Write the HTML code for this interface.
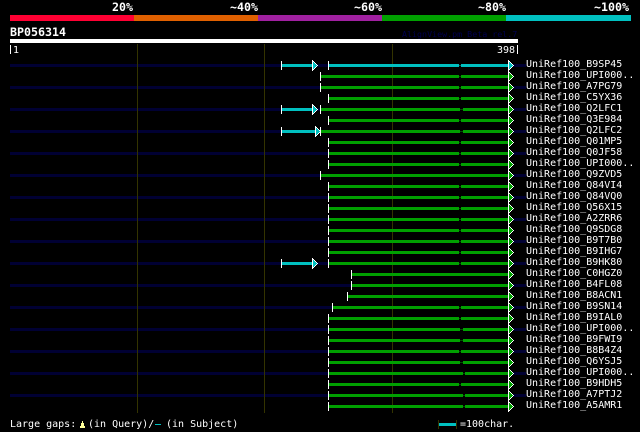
<!DOCTYPE html>
<html><head><meta charset="utf-8"><title>BP056314</title>
<style>
html,body{margin:0;padding:0;background:#000;width:640px;height:432px;overflow:hidden;position:relative}
i,b,span{position:absolute;display:block;font-style:normal}
.x{font-family:"DejaVu Sans Mono","Liberation Mono",monospace;font-size:10px;line-height:12px;color:#fff;white-space:pre;font-weight:normal}
.h{font-family:"DejaVu Sans Mono","Liberation Mono",monospace;font-size:11.63px;line-height:14px;font-weight:bold;color:#fff;white-space:pre}
.r{position:absolute;left:0;width:640px;height:3px}
.d{left:10px;width:516px;height:3px;background:#000033;top:0}
.t{top:-3px;width:1px;height:9px;background:#fff}
.c,.g{top:0;height:3px}
.c{background:#00c0c0}.g{background:#00a000}
.e2,.e3{top:0;height:3px;background:linear-gradient(#000,#000) 0 0/100% 1px no-repeat,linear-gradient(#000,#000) 0 2px/100% 1px no-repeat,#005000}
.e2{width:2px}.e3{width:3px}
.ec{background:linear-gradient(#000,#000) 0 0/100% 1px no-repeat,linear-gradient(#000,#000) 0 2px/100% 1px no-repeat,#006060}
.a{top:-4px;width:6px;height:11px;--f:#00a000;
background:
linear-gradient(var(--f),var(--f)) 1px 2px/1px 7px no-repeat,
linear-gradient(var(--f),var(--f)) 2px 3px/1px 5px no-repeat,
linear-gradient(var(--f),var(--f)) 3px 4px/1px 3px no-repeat,
linear-gradient(var(--f),var(--f)) 4px 5px/1px 1px no-repeat,
linear-gradient(#fff,#fff) 0 0/1px 11px no-repeat,
linear-gradient(#fff,#fff) 1px 1px/1px 9px no-repeat,
linear-gradient(#fff,#fff) 2px 2px/1px 7px no-repeat,
linear-gradient(#fff,#fff) 3px 3px/1px 5px no-repeat,
linear-gradient(#fff,#fff) 4px 4px/1px 3px no-repeat,
linear-gradient(#fff,#fff) 5px 5px/1px 1px no-repeat}
.ac{--f:#00c0c0}
.e{left:508px}
.v{top:44px;width:1px;height:369px;background:#333300}
.n{left:526px}
</style></head><body>
<i style="left:10px;top:15px;width:124px;height:6px;background:#ff0033"></i>
<i style="left:134px;top:15px;width:124px;height:6px;background:#e06000"></i>
<i style="left:258px;top:15px;width:124px;height:6px;background:#a020a0"></i>
<i style="left:382px;top:15px;width:124px;height:6px;background:#00a000"></i>
<i style="left:506px;top:15px;width:125px;height:6px;background:#00c0c0"></i>
<span class="h" style="left:112px;top:0">20%</span>
<span class="h" style="left:230px;top:0">~40%</span>
<span class="h" style="left:354px;top:0">~60%</span>
<span class="h" style="left:478px;top:0">~80%</span>
<span class="h" style="left:594px;top:0">~100%</span>
<span class="h" style="left:10px;top:25px">BP056314</span>
<span class="x" style="left:402px;top:28px;font-size:8.33px;color:#000050">AlignView.pm Beta rel.7</span>
<i style="left:10px;top:39px;width:508px;height:4px;background:#fff"></i>
<i style="left:10px;top:45px;width:1px;height:9px;background:#fff"></i>
<span class="x" style="left:13px;top:45px">1</span>
<span class="x" style="left:497px;top:45px">398</span>
<i style="left:517px;top:45px;width:1px;height:9px;background:#fff"></i>

<i class="d" style="top:64px"></i><i class="d" style="top:86px"></i><i class="d" style="top:108px"></i><i class="d" style="top:130px"></i>
<i class="d" style="top:152px"></i><i class="d" style="top:174px"></i><i class="d" style="top:196px"></i><i class="d" style="top:218px"></i>
<i class="d" style="top:240px"></i><i class="d" style="top:262px"></i><i class="d" style="top:284px"></i><i class="d" style="top:306px"></i>
<i class="d" style="top:328px"></i><i class="d" style="top:350px"></i><i class="d" style="top:372px"></i><i class="d" style="top:394px"></i>

<i class="v" style="left:137px"></i><i class="v" style="left:264px"></i><i class="v" style="left:392px"></i>

<div class="r" style="top:64px"><i class="t" style="left:281px"></i><i class="c" style="left:282px;width:30px"></i><i class="a ac" style="left:312px"></i><i class="t" style="left:328px"></i><i class="c" style="left:329px;width:179px"></i><i class="e2 ec" style="left:459px"></i><i class="a ac e"></i></div>
<div class="r" style="top:75px"><i class="t" style="left:320px"></i><i class="g" style="left:321px;width:187px"></i><i class="e2" style="left:459px"></i><i class="a e"></i></div>
<div class="r" style="top:86px"><i class="t" style="left:320px"></i><i class="g" style="left:321px;width:187px"></i><i class="e2" style="left:459px"></i><i class="a e"></i></div>
<div class="r" style="top:97px"><i class="t" style="left:328px"></i><i class="g" style="left:329px;width:179px"></i><i class="e2" style="left:459px"></i><i class="a e"></i></div>
<div class="r" style="top:108px"><i class="t" style="left:281px"></i><i class="c" style="left:282px;width:30px"></i><i class="a ac" style="left:312px"></i><i class="t" style="left:320px"></i><i class="g" style="left:321px;width:187px"></i><i class="e3" style="left:460px"></i><i class="a e"></i></div>
<div class="r" style="top:119px"><i class="t" style="left:328px"></i><i class="g" style="left:329px;width:179px"></i><i class="e2" style="left:459px"></i><i class="a e"></i></div>
<div class="r" style="top:130px"><i class="t" style="left:281px"></i><i class="c" style="left:282px;width:33px"></i><i class="t" style="left:320px"></i><i class="g" style="left:321px;width:187px"></i><i class="a ac" style="left:315px"></i><i class="e3" style="left:460px"></i><i class="a e"></i></div>
<div class="r" style="top:141px"><i class="t" style="left:328px"></i><i class="g" style="left:329px;width:179px"></i><i class="e2" style="left:459px"></i><i class="a e"></i></div>
<div class="r" style="top:152px"><i class="t" style="left:328px"></i><i class="g" style="left:329px;width:179px"></i><i class="e2" style="left:459px"></i><i class="a e"></i></div>
<div class="r" style="top:163px"><i class="t" style="left:328px"></i><i class="g" style="left:329px;width:179px"></i><i class="e2" style="left:459px"></i><i class="a e"></i></div>
<div class="r" style="top:174px"><i class="t" style="left:320px"></i><i class="g" style="left:321px;width:187px"></i><i class="a e"></i></div>
<div class="r" style="top:185px"><i class="t" style="left:328px"></i><i class="g" style="left:329px;width:179px"></i><i class="e2" style="left:459px"></i><i class="a e"></i></div>
<div class="r" style="top:196px"><i class="t" style="left:328px"></i><i class="g" style="left:329px;width:179px"></i><i class="e2" style="left:459px"></i><i class="a e"></i></div>
<div class="r" style="top:207px"><i class="t" style="left:328px"></i><i class="g" style="left:329px;width:179px"></i><i class="e2" style="left:459px"></i><i class="a e"></i></div>
<div class="r" style="top:218px"><i class="t" style="left:328px"></i><i class="g" style="left:329px;width:179px"></i><i class="e2" style="left:459px"></i><i class="a e"></i></div>
<div class="r" style="top:229px"><i class="t" style="left:328px"></i><i class="g" style="left:329px;width:179px"></i><i class="e2" style="left:459px"></i><i class="a e"></i></div>
<div class="r" style="top:240px"><i class="t" style="left:328px"></i><i class="g" style="left:329px;width:179px"></i><i class="e2" style="left:459px"></i><i class="a e"></i></div>
<div class="r" style="top:251px"><i class="t" style="left:328px"></i><i class="g" style="left:329px;width:179px"></i><i class="e2" style="left:459px"></i><i class="a e"></i></div>
<div class="r" style="top:262px"><i class="t" style="left:281px"></i><i class="c" style="left:282px;width:30px"></i><i class="a ac" style="left:312px"></i><i class="t" style="left:328px"></i><i class="g" style="left:329px;width:179px"></i><i class="e2" style="left:459px"></i><i class="a e"></i></div>
<div class="r" style="top:273px"><i class="t" style="left:351px"></i><i class="g" style="left:352px;width:156px"></i><i class="a e"></i></div>
<div class="r" style="top:284px"><i class="t" style="left:351px"></i><i class="g" style="left:352px;width:156px"></i><i class="a e"></i></div>
<div class="r" style="top:295px"><i class="t" style="left:347px"></i><i class="g" style="left:348px;width:160px"></i><i class="a e"></i></div>
<div class="r" style="top:306px"><i class="t" style="left:332px"></i><i class="g" style="left:333px;width:175px"></i><i class="e2" style="left:459px"></i><i class="a e"></i></div>
<div class="r" style="top:317px"><i class="t" style="left:328px"></i><i class="g" style="left:329px;width:179px"></i><i class="e2" style="left:459px"></i><i class="a e"></i></div>
<div class="r" style="top:328px"><i class="t" style="left:328px"></i><i class="g" style="left:329px;width:179px"></i><i class="e3" style="left:460px"></i><i class="a e"></i></div>
<div class="r" style="top:339px"><i class="t" style="left:328px"></i><i class="g" style="left:329px;width:179px"></i><i class="e3" style="left:460px"></i><i class="a e"></i></div>
<div class="r" style="top:350px"><i class="t" style="left:328px"></i><i class="g" style="left:329px;width:179px"></i><i class="e2" style="left:459px"></i><i class="a e"></i></div>
<div class="r" style="top:361px"><i class="t" style="left:328px"></i><i class="g" style="left:329px;width:179px"></i><i class="e3" style="left:460px"></i><i class="a e"></i></div>
<div class="r" style="top:372px"><i class="t" style="left:328px"></i><i class="g" style="left:329px;width:179px"></i><i class="e2" style="left:463px"></i><i class="a e"></i></div>
<div class="r" style="top:383px"><i class="t" style="left:328px"></i><i class="g" style="left:329px;width:179px"></i><i class="e2" style="left:459px"></i><i class="a e"></i></div>
<div class="r" style="top:394px"><i class="t" style="left:328px"></i><i class="g" style="left:329px;width:179px"></i><i class="e2" style="left:463px"></i><i class="a e"></i></div>
<div class="r" style="top:405px"><i class="t" style="left:328px"></i><i class="g" style="left:329px;width:179px"></i><i class="e2" style="left:463px"></i><i class="a e"></i></div>

<span class="x n" style="top:59px">UniRef100_B9SP45</span>
<span class="x n" style="top:70px">UniRef100_UPI000..</span>
<span class="x n" style="top:81px">UniRef100_A7PG79</span>
<span class="x n" style="top:92px">UniRef100_C5YX36</span>
<span class="x n" style="top:103px">UniRef100_Q2LFC1</span>
<span class="x n" style="top:114px">UniRef100_Q3E984</span>
<span class="x n" style="top:125px">UniRef100_Q2LFC2</span>
<span class="x n" style="top:136px">UniRef100_Q01MP5</span>
<span class="x n" style="top:147px">UniRef100_Q0JF58</span>
<span class="x n" style="top:158px">UniRef100_UPI000..</span>
<span class="x n" style="top:169px">UniRef100_Q9ZVD5</span>
<span class="x n" style="top:180px">UniRef100_Q84VI4</span>
<span class="x n" style="top:191px">UniRef100_Q84VQ0</span>
<span class="x n" style="top:202px">UniRef100_Q56X15</span>
<span class="x n" style="top:213px">UniRef100_A2ZRR6</span>
<span class="x n" style="top:224px">UniRef100_Q9SDG8</span>
<span class="x n" style="top:235px">UniRef100_B9T7B0</span>
<span class="x n" style="top:246px">UniRef100_B9IHG7</span>
<span class="x n" style="top:257px">UniRef100_B9HK80</span>
<span class="x n" style="top:268px">UniRef100_C0HGZ0</span>
<span class="x n" style="top:279px">UniRef100_B4FL08</span>
<span class="x n" style="top:290px">UniRef100_B8ACN1</span>
<span class="x n" style="top:301px">UniRef100_B9SN14</span>
<span class="x n" style="top:312px">UniRef100_B9IAL0</span>
<span class="x n" style="top:323px">UniRef100_UPI000..</span>
<span class="x n" style="top:334px">UniRef100_B9FWI9</span>
<span class="x n" style="top:345px">UniRef100_B8B4Z4</span>
<span class="x n" style="top:356px">UniRef100_Q6YSJ5</span>
<span class="x n" style="top:367px">UniRef100_UPI000..</span>
<span class="x n" style="top:378px">UniRef100_B9HDH5</span>
<span class="x n" style="top:389px">UniRef100_A7PTJ2</span>
<span class="x n" style="top:400px">UniRef100_A5AMR1</span>

<span class="x" style="left:10px;top:419px">Large gaps:</span>
<i style="left:82px;top:421px;width:1px;height:7px;background:#ffff99"></i>
<i style="left:81px;top:423px;width:3px;height:5px;background:#ffff99"></i>
<i style="left:80px;top:426px;width:5px;height:2px;background:#ffff99"></i>
<span class="x" style="left:88px;top:419px">(in Query)/</span>
<i style="left:155px;top:424px;width:6px;height:1px;background:#00c0c0"></i>
<span class="x" style="left:166px;top:419px">(in Subject)</span>
<i style="left:438px;top:420px;width:1px;height:9px;background:#333300"></i>
<i style="left:456px;top:420px;width:1px;height:9px;background:#333300"></i>
<i style="left:439px;top:423px;width:17px;height:3px;background:#00c0c0"></i>
<span class="x" style="left:460px;top:419px">=100char.</span>
</body></html>
